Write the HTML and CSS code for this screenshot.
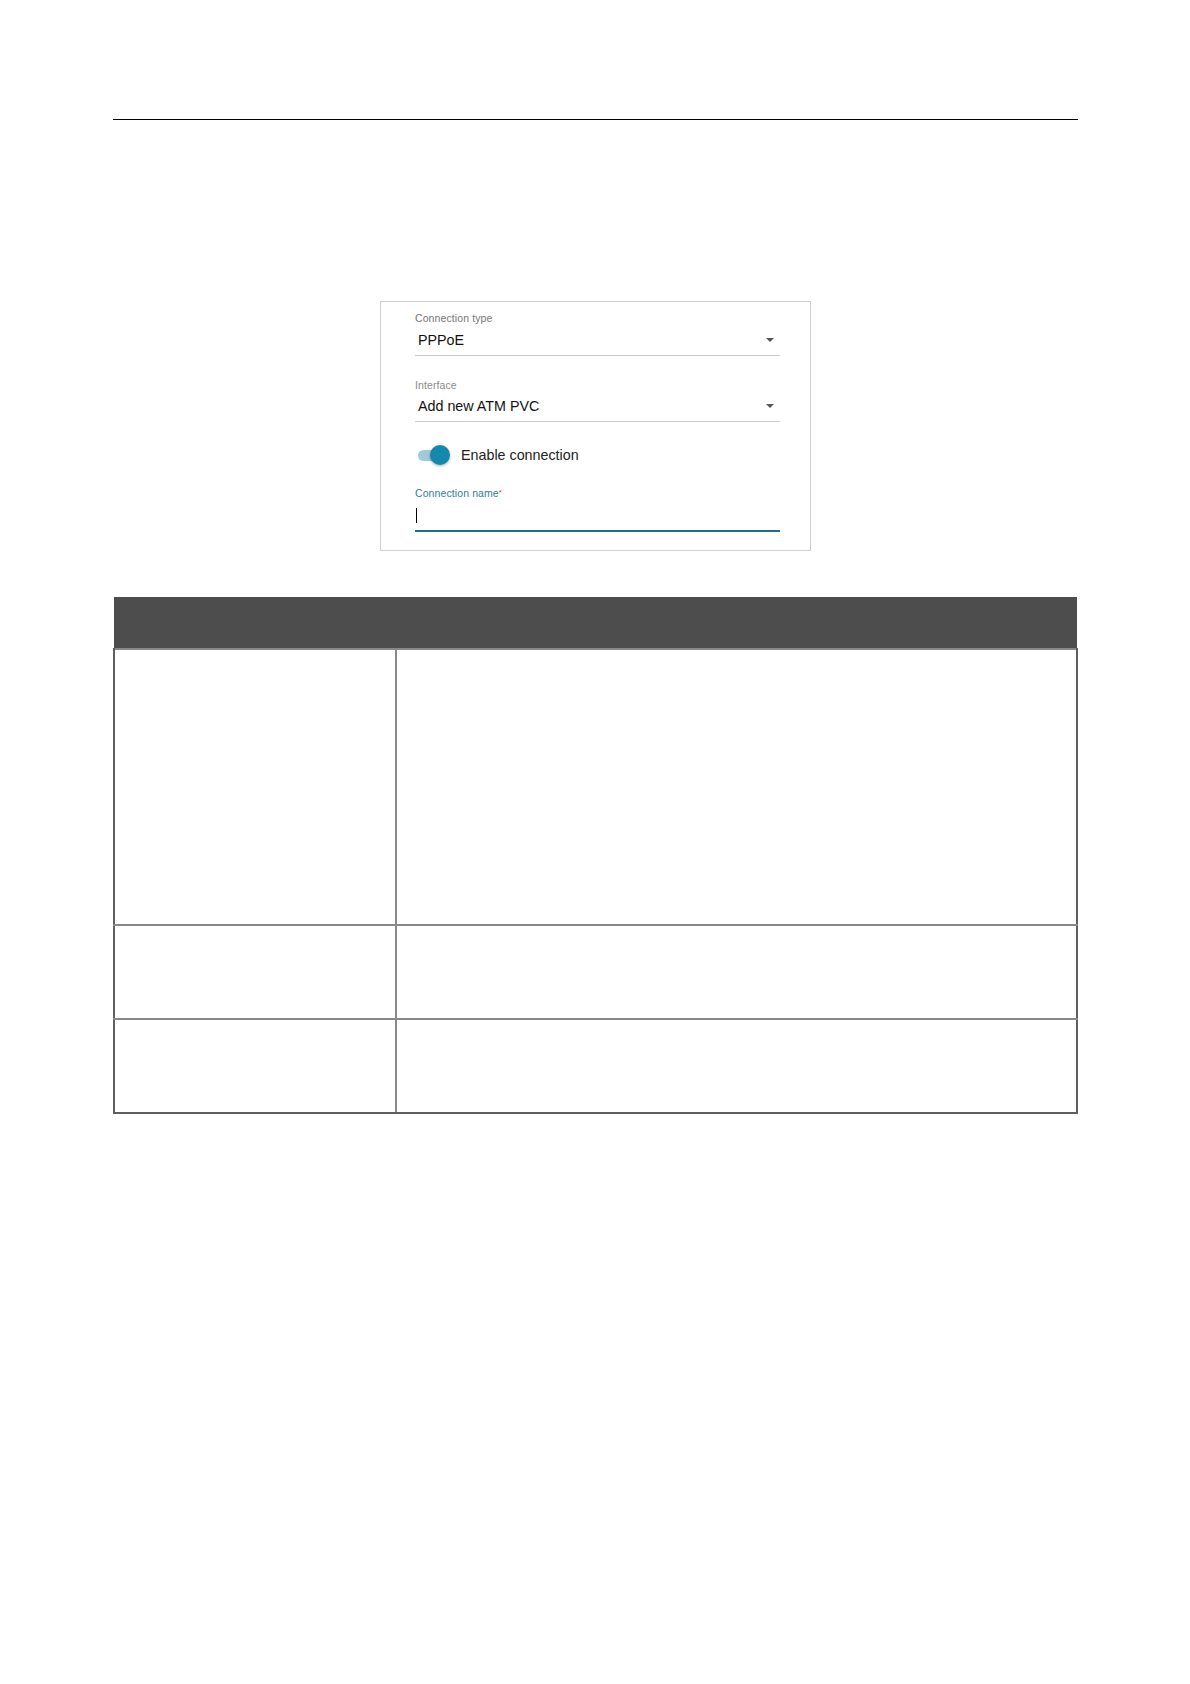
FILE: index.html
```html
<!DOCTYPE html>

<html>

<head>
    <title>PPPoE connection</title>
    <link rel="stylesheet" href="styles.css">
</head>

<body>
    <div class="page">
        <hr class="rule">

        <!-- Screenshot of the connection form -->
        <div class="figure">
            <div class="card">
                <div class="field">
                    <div class="label">Connection type</div>
                    <div class="select">
                        <span>PPPoE</span>
                        <span class="arrow"></span>
                    </div>
                </div>
                <div class="field field-next">
                    <div class="label label-light">Interface</div>
                    <div class="select">
                        <span>Add new ATM PVC</span>
                        <span class="arrow"></span>
                    </div>
                </div>
                <div class="switch-row">
                    <span class="switch"><span class="knob"></span></span>
                    <span>Enable connection</span>
                </div>
                <div class="field field-name">
                    <div class="label label-active">Connection name<span class="req">*</span></div>
                    <div class="input"><span class="caret"></span></div>
                </div>
            </div>
        </div>

        <table class="params">
            <thead>
                <tr>
                    <th class="col-name"></th>
                    <th></th>
                </tr>
            </thead>
            <tbody>
                <tr class="row-tall">
                    <td></td>
                    <td></td>
                </tr>
                <tr class="row-short">
                    <td></td>
                    <td></td>
                </tr>
                <tr class="row-short">
                    <td></td>
                    <td></td>
                </tr>
            </tbody>
        </table>
    </div>
</body>

</html>
```

FILE: styles.css
```css
body {
    margin: 0;
    background-color: #ffffff;
    font-family: 'Liberation Sans', Arial, sans-serif;
    color: #222222;
}

.page {
    width: 965px;
    margin-left: 113px;
    padding-top: 119px;
}

.rule {
    margin: 0;
    border: none;
    border-top: 1px solid #000000;
}

.figure {
    display: flex;
    padding-left: 267px;
    padding-top: 181px;
}

.card {
    width: 365px;
    padding: 10px 30px 18px 34px;
    border: 1px solid #cfcfcf;
}

.label {
    font-size: 10.5px;
    line-height: 12px;
    color: #777777;
    letter-spacing: 0.1px;
}

.label-light {
    color: #8a8a8a;
}

.label-active {
    color: #2f7f94;
}

.req {
    color: #d33c3c;
    font-size: 8px;
    vertical-align: top;
}

.select {
    display: flex;
    justify-content: space-between;
    align-items: center;
    padding: 6px 6px 5px 3px;
    font-size: 14.3px;
    line-height: 20px;
    color: #111111;
    border-bottom: 1px solid #cccccc;
}

.field-next {
    margin-top: 23px;
}

.field-next .select {
    padding-top: 5px;
}

/* small triangle of the dropdown */
.arrow {
    width: 0;
    height: 0;
    border-left: 4px solid transparent;
    border-right: 4px solid transparent;
    border-top: 4px solid #555555;
}

.switch-row {
    display: flex;
    align-items: center;
    gap: 14px;
    height: 24px;
    margin-top: 21px;
    padding-left: 3px;
    font-size: 14.3px;
}

.switch {
    position: relative;
    width: 29px;
    height: 11px;
    border-radius: 6px;
    background-color: #9fcbd8;
}

.knob {
    position: absolute;
    top: -5px;
    right: -3px;
    width: 20px;
    height: 20px;
    border-radius: 50%;
    background-color: #1688ad;
    box-shadow: 0 1px 3px rgba(0, 0, 0, 0.35);
}

.field-name {
    margin-top: 20px;
}

.input {
    height: 22px;
    padding-top: 9px;
    border-bottom: 2px solid #1f6f86;
}

.caret {
    display: block;
    width: 1px;
    height: 15px;
    margin-left: 1px;
    background-color: #000000;
}

.params {
    width: 965px;
    margin-top: 46px;
    border-collapse: collapse;
}

.params th {
    height: 51px;
    padding: 0;
    background-color: #4d4d4d;
}

.params td {
    padding: 0;
    border: 2px solid #888888;
}

.params td:first-child {
    border-left-color: #5f5f5f;
}

.params td:last-child {
    border-right-color: #5f5f5f;
}

.params tbody tr:last-child td {
    border-bottom-color: #5f5f5f;
}

.col-name {
    width: 282px;
}

.row-tall td {
    height: 274px;
}

.row-short td {
    height: 92px;
}
```
